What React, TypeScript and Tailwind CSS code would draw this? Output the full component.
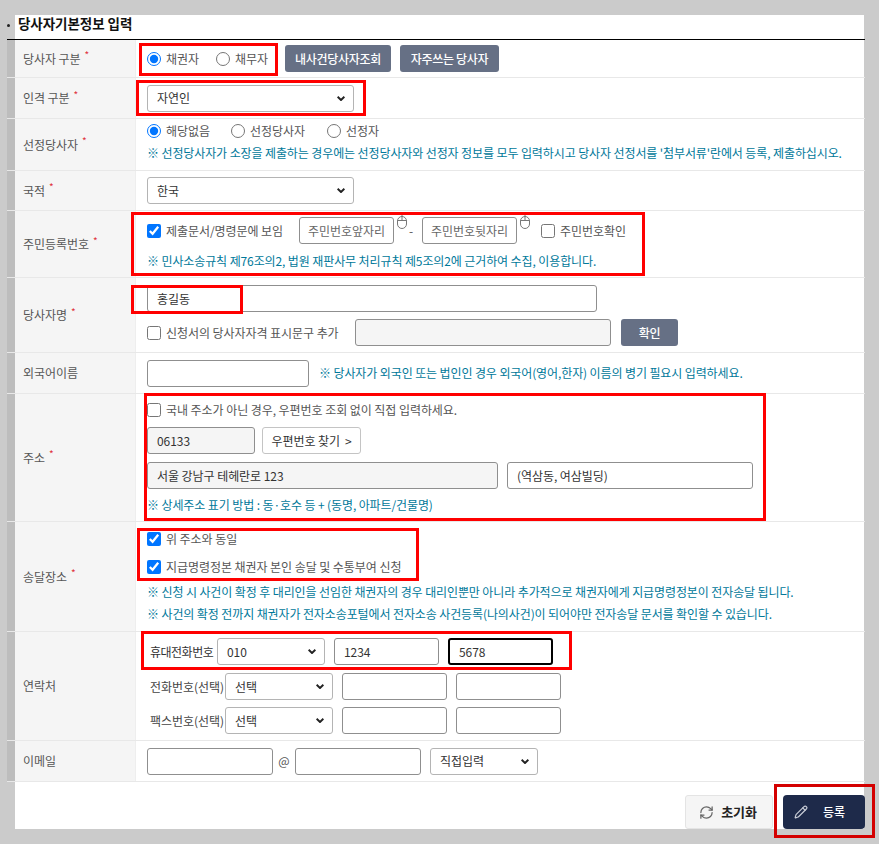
import { Pencil, RefreshCw } from 'lucide-react'
import type { ReactNode } from 'react'

function Row({ label, required, className, children }: { label: string; required?: boolean; className: string; children: ReactNode }) {
	return (
		<div className={`flex border-b border-[#e8e8e8] ${className}`}>
			<div className="w-[129px] shrink-0 flex items-center border-l-8 border-r border-l-[#bdbdbd] border-r-[#eeeeee] bg-[#f5f5f5] pl-2 text-[#555555]">
				<span>{label}</span>
				{required && <span className="ml-[4px] -mt-[8px] text-[10px] text-[#e0323c]">*</span>}
			</div>
			<div className="flex-1 min-w-0 pl-[11px]">{children}</div>
		</div>
	)
}

function Note({ children, className = '' }: { children: ReactNode; className?: string }) {
	return <div className={`h-[20px] flex items-center whitespace-nowrap tracking-[-0.11px] text-[#00789a] ${className}`}>{children}</div>
}

function Radio({ label, checked, className = '' }: { label: string; checked?: boolean; className?: string }) {
	return (
		<label className={`flex items-center text-[#555555] ${className}`}>
			<input type="radio" defaultChecked={checked} name={label} className="w-[14px] h-[14px] m-0 mr-[5px]" />
			{label}
		</label>
	)
}

function Check({ label, checked, className = '' }: { label: string; checked?: boolean; className?: string }) {
	return (
		<label className={`flex items-center h-[20px] whitespace-nowrap text-[#555555] ${className}`}>
			<input type="checkbox" defaultChecked={checked} className="w-[14px] h-[14px] m-0 mr-[5px]" />
			{label}
		</label>
	)
}

function TextInput({ value, placeholder, className = '' }: { value?: string; placeholder?: string; className?: string }) {
	return (
		<input
			defaultValue={value}
			placeholder={placeholder}
			className={`h-[27px] shrink-0 rounded-[3px] border border-[#8f8f8f] px-[9px] text-[#333333] outline-none placeholder:text-[#666666] ${className}`}
		/>
	)
}

function Select({ options, className = '' }: { options: string[]; className?: string }) {
	return (
		<div className={`relative h-[27px] shrink-0 ${className}`}>
			<select className="h-full w-full appearance-none rounded-[3px] border border-[#b4b4b4] bg-white pl-[9px] text-[#333333] outline-none">
				{options.map((o) => (
					<option key={o}>{o}</option>
				))}
			</select>
			<svg viewBox="0 0 8 5" className="absolute right-[9px] top-[11px] h-[5px] w-[8px] text-[#222222]" fill="none" stroke="currentColor" strokeWidth="2">
				<path d="M.6.8 4 4 7.4.8" />
			</svg>
		</div>
	)
}

function MouseIcon() {
	return (
		<svg viewBox="0 0 12 16" className="ml-[2px] w-[12px] h-[16px] shrink-0 -mt-[18px] text-[#777777]" fill="none" stroke="currentColor" strokeWidth="1">
			<rect x="1.5" y="2.5" width="9" height="12" rx="4.5" />
			<path d="M6 0v6.5M1.5 6.5h9" />
		</svg>
	)
}

function GrayButton({ children, className = '' }: { children: ReactNode; className?: string }) {
	return (
		<button className={`h-[27px] rounded-[3px] bg-[#667085] font-medium tracking-[-0.3px] text-white ${className}`}>
			{children}
		</button>
	)
}

export default function App() {
	return (
		<div className="relative h-[844px] w-[879px] overflow-hidden bg-[#cbcbcb] pt-[15px] pl-[15px] font-['Noto_Sans_CJK_KR','Noto_Sans',sans-serif] text-[12px] tracking-[-0.06px]">
			<div className="h-[814px] w-[849px] bg-white">
				<div className="-ml-2 w-[858px]">
					<div className="relative flex h-[25px] items-center border-b border-black pb-[7px] pl-[11px] text-[13.5px] font-bold text-[#111111]">
						<span className="absolute left-0 top-[9px] h-[3px] w-[3px] rounded-full bg-[#222222]" />
						당사자기본정보 입력
					</div>

					<Row label="당사자 구분" required className="h-[38px]">
						<div className="flex h-full items-center">
							<Radio label="채권자" checked className="w-[69px]" />
							<Radio label="채무자" className="w-[69px]" />
							<GrayButton className="w-[106px]">내사건당사자조회</GrayButton>
							<GrayButton className="ml-[9px] w-[99px]">자주쓰는 당사자</GrayButton>
						</div>
					</Row>

					<Row label="인격 구분" required className="h-[41px]">
						<div className="flex h-full items-center">
							<Select options={['자연인']} className="w-[207px]" />
						</div>
					</Row>

					<Row label="선정당사자" required className="h-[52px]">
						<div className="flex pt-[2px]">
							<Radio label="해당없음" checked className="h-[20px] w-[84px]" />
							<Radio label="선정당사자" className="h-[20px] w-[96px]" />
							<Radio label="선정자" className="h-[20px]" />
						</div>
						<Note className="mt-[2px]">※ 선정당사자가 소장을 제출하는 경우에는 선정당사자와 선정자 정보를 모두 입력하시고 당사자 선정서를 '첨부서류'란에서 등록, 제출하십시오.</Note>
					</Row>

					<Row label="국적" required className="h-[40px]">
						<div className="flex h-full items-center">
							<Select options={['한국']} className="w-[207px]" />
						</div>
					</Row>

					<Row label="주민등록번호" required className="h-[67px]">
						<div className="flex items-center pt-[6px]">
							<Check label="제출문서/명령문에 보임" checked className="w-[152px]" />
							<TextInput placeholder="주민번호앞자리" className="w-[95px] !px-[4px] text-center" />
							<MouseIcon />
							<span className="mr-[8px] w-[6px] text-center text-[#555555]">-</span>
							<TextInput placeholder="주민번호뒷자리" className="w-[95px] !px-[4px] text-center" />
							<MouseIcon />
							<Check label="주민번호확인" className="ml-[10px]" />
						</div>
						<Note className="mt-[7px]">※ 민사소송규칙 제76조의2, 법원 재판사무 처리규칙 제5조의2에 근거하여 수집, 이용합니다.</Note>
					</Row>

					<Row label="당사자명" required className="h-[75px]">
						<div className="pt-[7px]">
							<TextInput value="홍길동" className="block w-[450px]" />
						</div>
						<div className="mt-[7px] flex items-center">
							<Check label="신청서의 당사자자격 표시문구 추가" className="w-[208px]" />
							<TextInput className="w-[256px] bg-[#f5f5f5]" />
							<GrayButton className="ml-[10px] w-[57px]">확인</GrayButton>
						</div>
					</Row>

					<Row label="외국어이름" className="h-[41px]">
						<div className="flex h-full items-center">
							<TextInput className="w-[162px]" />
							<Note className="ml-[10px]">※ 당사자가 외국인 또는 법인인 경우 외국어(영어,한자) 이름의 병기 필요시 입력하세요.</Note>
						</div>
					</Row>

					<Row label="주소" required className="h-[128px]">
						<div className="pt-[6px]">
							<Check label="국내 주소가 아닌 경우, 우편번호 조회 없이 직접 입력하세요." />
						</div>
						<div className="mt-[7px] flex">
							<TextInput value="06133" className="w-[108px] bg-[#f5f5f5]" />
							<button className="ml-[7px] h-[27px] w-[99px] rounded-[3px] border border-[#c4c4c4] bg-white text-[#333333]">
								우편번호 찾기<span className="ml-[5px]">&gt;</span>
							</button>
						</div>
						<div className="mt-[8px] flex">
							<TextInput value="서울 강남구 테헤란로 123" className="w-[351px] bg-[#f5f5f5]" />
							<TextInput value="(역삼동, 여삼빌딩)" className="ml-[9px] w-[246px]" />
						</div>
						<Note className="mt-[6px]">※ 상세주소 표기 방법 : 동·호수 등 + (동명, 아파트/건물명)</Note>
					</Row>

					<Row label="송달장소" required className="h-[110px]">
						<div className="pt-[7px]">
							<Check label="위 주소와 동일" checked />
						</div>
						<Check label="지급명령정본 채권자 본인 송달 및 수통부여 신청" checked className="mt-[8px]" />
						<Note className="mt-[5px]">※ 신청 시 사건이 확정 후 대리인을 선임한 채권자의 경우 대리인뿐만 아니라 추가적으로 채권자에게 지급명령정본이 전자송달 됩니다.</Note>
						<Note className="mt-[2px]">※ 사건의 확정 전까지 채권자가 전자소송포털에서 전자소송 사건등록(나의사건)이 되어야만 전자송달 문서를 확인할 수 있습니다.</Note>
					</Row>

					<Row label="연락처" className="h-[109px]">
						<div className="flex items-center pt-[6px] pl-[3px]">
							<span className="w-[67px] tracking-[-0.5px] text-[#333333]">휴대전화번호</span>
							<Select options={['010']} className="w-[108px]" />
							<TextInput value="1234" className="ml-[9px] w-[105px]" />
							<TextInput value="5678" className="ml-[9px] w-[105px] border-2 border-black" />
						</div>
						<div className="mt-[8px] flex items-center pl-[3px]">
							<span className="w-[75px] text-[#444444]">전화번호(선택)</span>
							<Select options={['선택']} className="w-[108px]" />
							<TextInput className="ml-[9px] w-[105px]" />
							<TextInput className="ml-[9px] w-[105px]" />
						</div>
						<div className="mt-[7px] flex items-center pl-[3px]">
							<span className="w-[75px] text-[#444444]">팩스번호(선택)</span>
							<Select options={['선택']} className="w-[108px]" />
							<TextInput className="ml-[9px] w-[105px]" />
							<TextInput className="ml-[9px] w-[105px]" />
						</div>
					</Row>

					<Row label="이메일" className="h-[41px]">
						<div className="flex h-full items-center">
							<TextInput className="w-[126px]" />
							<span className="w-[22px] text-center text-[#555555]">@</span>
							<TextInput className="w-[126px]" />
							<Select options={['직접입력']} className="ml-[9px] w-[108px]" />
						</div>
					</Row>

					<div className="flex justify-end gap-[10px] pt-[13px]">
						<button className="flex h-[34px] w-[88px] items-center justify-center gap-[7px] rounded-[3px] border border-[#e4e4e4] bg-[#f5f5f5] pr-[2px] text-[13px] font-bold text-[#222222]">
							<RefreshCw size={15} className="text-[#666666]" />
							초기화
						</button>
						<button className="flex h-[34px] w-[82px] items-center rounded-[4px] bg-[#1e2a4a] pl-[11px] font-medium text-white">
							<Pencil size={14} className="text-[#c8ccd6]" />
							<span className="ml-[15px]">등록</span>
						</button>
					</div>
				</div>
			</div>

			<div className="absolute left-[139px] top-[43px] h-[33px] w-[139px] border-[3px] border-[#ff0000]" />
			<div className="absolute left-[136px] top-[80px] h-[36px] w-[230px] border-[3px] border-[#ff0000]" />
			<div className="absolute left-[131px] top-[212px] h-[64px] w-[514px] border-[3px] border-[#ff0000]" />
			<div className="absolute left-[131px] top-[285px] h-[29px] w-[112px] border-[3px] border-[#ff0000]" />
			<div className="absolute left-[144px] top-[393px] h-[128px] w-[622px] border-[3px] border-[#ff0000]" />
			<div className="absolute left-[137px] top-[528px] h-[53px] w-[282px] border-[3px] border-[#ff0000]" />
			<div className="absolute left-[141px] top-[631px] h-[39px] w-[431px] border-[3px] border-[#ff0000]" />
			<div className="absolute left-[774px] top-[784px] h-[54px] w-[101px] border-[3px] border-[#d40000]" />
		</div>
	)
}
